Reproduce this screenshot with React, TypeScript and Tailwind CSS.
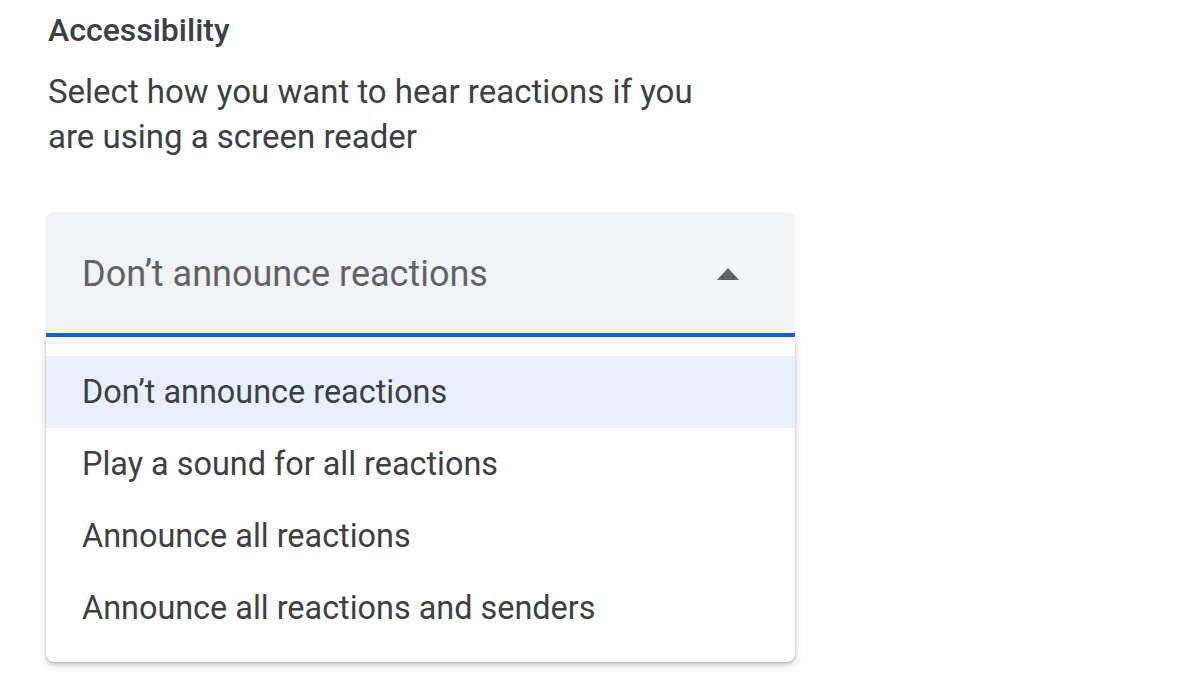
const options = [
  "Don’t announce reactions",
  "Play a sound for all reactions",
  "Announce all reactions",
  "Announce all reactions and senders",
];

export default function App() {
  const selected = 0;

  return (
    <div className="h-[675px] w-[1200px] overflow-hidden bg-white font-['Roboto',sans-serif]">
      <div className="px-[48px] pt-[10px]">
        <h2 className="text-[32px] font-medium leading-[40px] text-[#3c4043]">Accessibility</h2>
        <p className="mt-[19px] w-[670px] text-[33px] leading-[45px] text-[#3c4043]">
          Select how you want to hear reactions if you are using a screen reader
        </p>
      </div>

      <div className="ml-[46px] mt-[53px] w-[749px]">
        <div className="flex h-[125px] items-center justify-between rounded-t-[8px] border-b-[4px] border-[#1a5fcc] bg-[#f1f3f4] pl-[36px] pr-[56px]">
          <span className="mt-[2px] text-[36px] text-[#5f6368]">{options[selected]}</span>
          <svg width="22" height="12" viewBox="0 0 22 12" className="mt-[2px]">
            <path d="M0 12 L11 0 L22 12 Z" fill="#5f6368" />
          </svg>
        </div>

        <ul className="rounded-b-[8px] bg-white pt-[19px] pb-[18px] shadow-[0_3px_6px_rgba(60,64,67,0.28),0_1px_2px_rgba(60,64,67,0.22)]">
          {options.map((o, i) => (
            <li
              key={o}
              className={
                i === selected
                  ? "flex h-[72px] items-center bg-[#e8f0fe] pl-[36px] text-[32.4px] text-[#3c4043]"
                  : "flex h-[72px] items-center pl-[36px] text-[32.4px] text-[#3c4043]"
              }
            >
              {o}
            </li>
          ))}
        </ul>
      </div>
    </div>
  );
}
